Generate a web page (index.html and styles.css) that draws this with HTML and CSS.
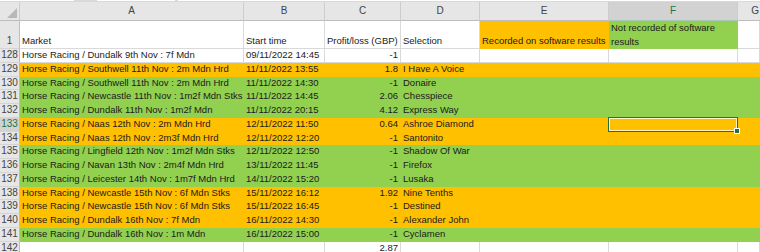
FILE: index.html
```html
<!DOCTYPE html>
<html>
<head>
<meta charset="utf-8">
<link rel="stylesheet" href="styles.css">
</head>
<body>
<div class="sheet">
  <div class="topstrip"><span class="box b1"></span><span class="box b2"></span><span class="box b3"></span></div>
  <div class="row colhead">
    <div class="c corner"><span class="tri"></span></div>
    <div class="c">A</div><div class="c">B</div><div class="c">C</div><div class="c">D</div><div class="c">E</div><div class="c selh">F</div><div class="c g">G</div>
  </div>
  <div class="row r1">
    <div class="c rh">1</div>
    <div class="c">Market</div><div class="c">Start time</div><div class="c">Profit/loss (GBP)</div><div class="c">Selection</div>
    <div class="c fo">Recorded on software results</div>
    <div class="c fg">Not recorded of software results</div>
    <div class="c"></div>
  </div>
  <div class="row w">
    <div class="c rh">128</div><div class="c">Horse Racing / Dundalk 9th Nov : 7f Mdn</div><div class="c">09/11/2022 14:45</div><div class="c n">-1</div><div class="c"></div><div class="c"></div><div class="c"></div><div class="c"></div>
  </div>
  <div class="row o">
    <div class="c rh">129</div><div class="c">Horse Racing / Southwell 11th Nov : 2m Mdn Hrd</div><div class="c">11/11/2022 13:55</div><div class="c n">1.8</div><div class="c">I Have A Voice</div><div class="c"></div><div class="c"></div><div class="c"></div>
  </div>
  <div class="row gr">
    <div class="c rh">130</div><div class="c">Horse Racing / Southwell 11th Nov : 2m Mdn Hrd</div><div class="c">11/11/2022 14:30</div><div class="c n">-1</div><div class="c">Donaire</div><div class="c"></div><div class="c"></div><div class="c"></div>
  </div>
  <div class="row gr">
    <div class="c rh">131</div><div class="c">Horse Racing / Newcastle 11th Nov : 1m2f Mdn Stks</div><div class="c">11/11/2022 14:45</div><div class="c n">2.06</div><div class="c">Chesspiece</div><div class="c"></div><div class="c"></div><div class="c"></div>
  </div>
  <div class="row gr">
    <div class="c rh">132</div><div class="c">Horse Racing / Dundalk 11th Nov : 1m2f Mdn</div><div class="c">11/11/2022 20:15</div><div class="c n">4.12</div><div class="c">Express Way</div><div class="c"></div><div class="c"></div><div class="c"></div>
  </div>
  <div class="row o">
    <div class="c rh selr">133</div><div class="c">Horse Racing / Naas 12th Nov : 2m Mdn Hrd</div><div class="c">12/11/2022 11:50</div><div class="c n">0.64</div><div class="c">Ashroe Diamond</div><div class="c"></div><div class="c sel"><span class="handle"></span></div><div class="c"></div>
  </div>
  <div class="row o">
    <div class="c rh">134</div><div class="c">Horse Racing / Naas 12th Nov : 2m3f Mdn Hrd</div><div class="c">12/11/2022 12:20</div><div class="c n">-1</div><div class="c">Santonito</div><div class="c"></div><div class="c"></div><div class="c"></div>
  </div>
  <div class="row gr">
    <div class="c rh">135</div><div class="c">Horse Racing / Lingfield 12th Nov : 1m2f Mdn Stks</div><div class="c">12/11/2022 12:50</div><div class="c n">-1</div><div class="c">Shadow Of War</div><div class="c"></div><div class="c"></div><div class="c"></div>
  </div>
  <div class="row gr">
    <div class="c rh">136</div><div class="c">Horse Racing / Navan 13th Nov : 2m4f Mdn Hrd</div><div class="c">13/11/2022 11:45</div><div class="c n">-1</div><div class="c">Firefox</div><div class="c"></div><div class="c"></div><div class="c"></div>
  </div>
  <div class="row gr">
    <div class="c rh">137</div><div class="c">Horse Racing / Leicester 14th Nov : 1m7f Mdn Hrd</div><div class="c">14/11/2022 15:20</div><div class="c n">-1</div><div class="c">Lusaka</div><div class="c"></div><div class="c"></div><div class="c"></div>
  </div>
  <div class="row o">
    <div class="c rh">138</div><div class="c">Horse Racing / Newcastle 15th Nov : 6f Mdn Stks</div><div class="c">15/11/2022 16:12</div><div class="c n">1.92</div><div class="c">Nine Tenths</div><div class="c"></div><div class="c"></div><div class="c"></div>
  </div>
  <div class="row o">
    <div class="c rh">139</div><div class="c">Horse Racing / Newcastle 15th Nov : 6f Mdn Stks</div><div class="c">15/11/2022 16:45</div><div class="c n">-1</div><div class="c">Destined</div><div class="c"></div><div class="c"></div><div class="c"></div>
  </div>
  <div class="row o">
    <div class="c rh">140</div><div class="c">Horse Racing / Dundalk 16th Nov : 7f Mdn</div><div class="c">16/11/2022 14:30</div><div class="c n">-1</div><div class="c">Alexander John</div><div class="c"></div><div class="c"></div><div class="c"></div>
  </div>
  <div class="row gr">
    <div class="c rh">141</div><div class="c">Horse Racing / Dundalk 16th Nov : 1m Mdn</div><div class="c">16/11/2022 15:00</div><div class="c n">-1</div><div class="c">Cyclamen</div><div class="c"></div><div class="c"></div><div class="c"></div>
  </div>
  <div class="row w">
    <div class="c rh">142</div><div class="c"></div><div class="c"></div><div class="c n">2.87</div><div class="c"></div><div class="c"></div><div class="c"></div><div class="c"></div>
  </div>
</div>
</body>
</html>
```
FILE: styles.css
```css
html, body {
  margin: 0;
  padding: 0;
  background: #ffffff;
  overflow: hidden;
}
.sheet {
  width: 760px;
  height: 252px;
  overflow: hidden;
  font-family: "Liberation Sans", Arial, sans-serif;
  font-size: 9.5px;
  color: #1b1b1b;
}
.topstrip {
  height: 2px;
  background: #d9d9d9;
  display: flex;
  gap: 3px;
}
.box {
  display: block;
  height: 1px;
  background: #ffffff;
}
.b1 { width: 74px; }
.b2 { width: 78px; margin-left: 20px; }
.b3 { flex: 1; margin-left: 0; }
.row {
  display: grid;
  grid-template-columns: 20px 224px 81px 76px 79px 129px 129px 22px;
  height: 13.75px;
}
.c {
  box-sizing: border-box;
  border-right: 1px solid #d9d9d9;
  border-bottom: 1px solid #d9d9d9;
  padding: 0 2px;
  white-space: nowrap;
  overflow: visible;
  line-height: 12.75px;
  display: flex;
  align-items: flex-end;
  min-width: 0;
}
.n {
  justify-content: flex-end;
}
.colhead {
  height: 19px;
  background: #e6e6e6;
}
.colhead .c {
  justify-content: center;
  color: #444444;
  border-right: 1px solid #cdcdcd;
  border-bottom: 1px solid #bdbdbd;
  align-items: center;
  font-size: 10px;
}
.colhead .corner {
  position: relative;
  background: #e6e6e6;
}
.tri {
  position: absolute;
  right: 2px;
  bottom: 2px;
  width: 0;
  height: 0;
  border-left: 10px solid transparent;
  border-bottom: 10px solid #b8b8b8;
}
.colhead .selh {
  background: #d2d2d2;
  color: #217346;
  border-bottom: 1px solid #a8c7b4;
}
.colhead .g {
  justify-content: flex-end;
  padding-right: 1px;
  border-right: none;
}
.rh {
  background: #e6e6e6;
  color: #444444;
  justify-content: center;
  padding: 0;
  border-right: 1px solid #bdbdbd;
  border-bottom: 1px solid #d4d4d4;
  font-size: 10px;
}
.selr {
  background: #d2d2d2;
  color: #217346;
}
.r1 {
  height: 28px;
}
.r1 .c {
  white-space: nowrap;
}
.r1 .fo {
  background: #ffc000;
  border-color: #ffc000;
}
.r1 .fg {
  background: #92d050;
  border-color: #92d050;
  white-space: normal;
  line-height: 13.5px;
  padding-bottom: 0;
}
.o .c:not(.rh) {
  background: #ffc000;
  border-right-color: #ffc000;
  border-bottom-color: #ffc000;
}
.gr .c:not(.rh) {
  background: #92d050;
  border-right-color: #92d050;
  border-bottom-color: #92d050;
}
.sel {
  position: relative;
}
.sel::after {
  content: "";
  position: absolute;
  left: -1px;
  top: -1px;
  right: -1px;
  bottom: -1px;
  border: 1px solid #217346;
  box-shadow: inset 0 0 0 1px #fff4c8;
}
.handle {
  position: absolute;
  right: -3px;
  bottom: -3px;
  width: 4px;
  height: 4px;
  background: #217346;
  border: 1px solid #ffffff;
  z-index: 2;
}
```
